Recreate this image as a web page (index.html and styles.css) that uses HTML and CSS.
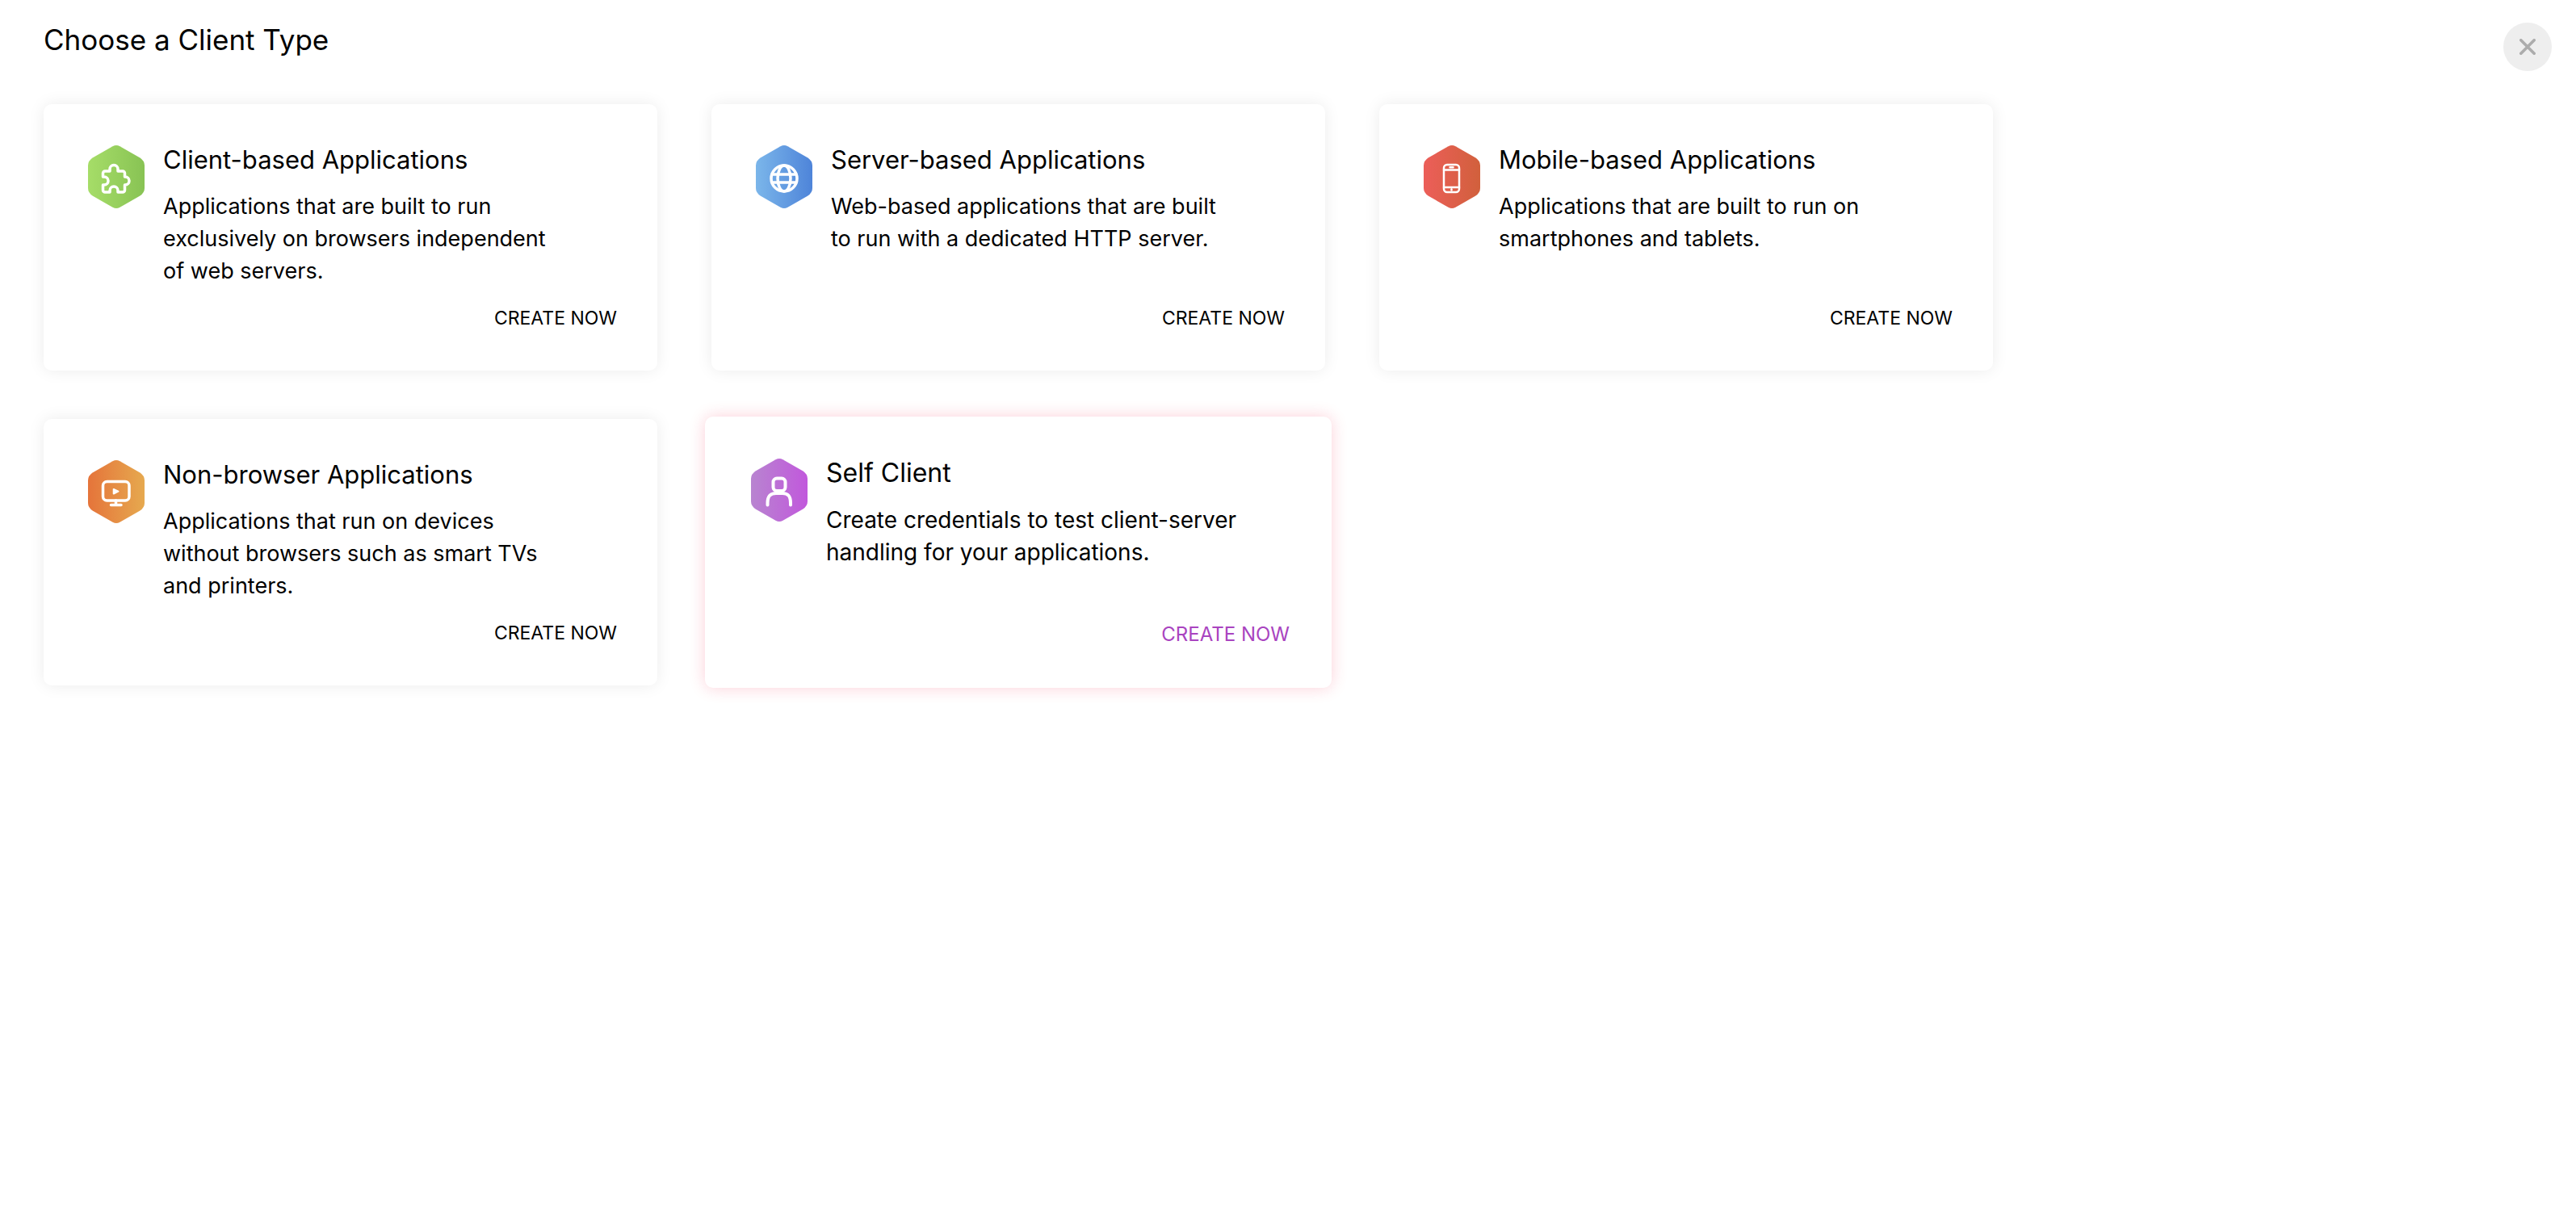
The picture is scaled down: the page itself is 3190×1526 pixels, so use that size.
FILE: index.html
```html
<!DOCTYPE html>
<html lang="en">
<head>
<meta charset="utf-8">
<title>Choose a Client Type</title>
<link rel="stylesheet" href="styles.css">
</head>
<body>
<svg class="defs" width="0" height="0" aria-hidden="true">
  <defs>
    <linearGradient id="green"><stop offset="0" stop-color="#a6dd68"/><stop offset="1" stop-color="#88c354"/></linearGradient>
    <linearGradient id="blue"><stop offset="0" stop-color="#7bb6ea"/><stop offset="1" stop-color="#4e84d9"/></linearGradient>
    <linearGradient id="red"><stop offset="0" stop-color="#ec5e59"/><stop offset="1" stop-color="#d1603c"/></linearGradient>
    <linearGradient id="orange"><stop offset="0" stop-color="#e5743a"/><stop offset="1" stop-color="#e6a94f"/></linearGradient>
    <linearGradient id="purple"><stop offset="0" stop-color="#b884d0"/><stop offset="1" stop-color="#c158dc"/></linearGradient>
    <path id="hexagon" d="M30.5 1.2Q35-1.2 39.5 1.2L64 15.2Q70 19 70 25V53Q70 59 64 62.8L39.5 76.8Q35 79.2 30.5 76.8L6 62.8Q0 59 0 53V25Q0 19 6 15.2Z"/>
  </defs>
</svg>

<header class="page-header">
  <h1 class="page-title">Choose a Client Type</h1>
  <button class="close" type="button" aria-label="Close">
    <svg width="20" height="20" viewBox="0 0 20 20" fill="none" stroke="#acacac" stroke-width="3.6" stroke-linecap="round"><path d="M1.800 1.800l16.400 16.400M18.200 1.800l-16.400 16.400"/></svg>
  </button>
</header>

<main class="cards">
  <article class="card">
    <svg class="icon" viewBox="0 0 70 78" aria-hidden="true">
      <use href="#hexagon" fill="url(#green)"/>
      <path class="line" d="M21 32H27V29.500a5 5 0 0 1 10 0V32H43a2.500 2.500 0 0 1 2.500 2.500V39H46a5 5 0 0 1 0 10H45.500V55.500a2.500 2.500 0 0 1-2.500 2.500H37V56a5 5 0 0 0-10 0V58H21a2.500 2.500 0 0 1-2.500-2.500V49H20a5 5 0 0 0 0-10H18.500V34.500A2.500 2.500 0 0 1 21 32Z"/>
    </svg>
    <div class="body">
      <h2 class="name">Client-based Applications</h2>
      <p class="text">Applications that are built to run exclusively on browsers independent of web servers.</p>
    </div>
    <button class="create" type="button">CREATE NOW</button>
  </article>

  <article class="card">
    <svg class="icon" viewBox="0 0 70 78" aria-hidden="true">
      <use href="#hexagon" fill="url(#blue)"/>
      <g class="line"><circle cx="35" cy="41" r="16"/><ellipse cx="35" cy="41" rx="8" ry="16"/><path d="M20 36H50M20 46H50"/></g>
    </svg>
    <div class="body">
      <h2 class="name">Server-based Applications</h2>
      <p class="text">Web-based applications that are built to run with a dedicated HTTP server.</p>
    </div>
    <button class="create" type="button">CREATE NOW</button>
  </article>

  <article class="card">
    <svg class="icon" viewBox="0 0 70 78" aria-hidden="true">
      <use href="#hexagon" fill="url(#red)"/>
      <g class="line thin"><rect x="25" y="24" width="19" height="34" rx="4"/><path d="M25 30.500H44M25 52H44M32.500 27.300H36.500M34.500 54.500V55.500"/></g>
    </svg>
    <div class="body">
      <h2 class="name">Mobile-based Applications</h2>
      <p class="text">Applications that are built to run on smartphones and tablets.</p>
    </div>
    <button class="create" type="button">CREATE NOW</button>
  </article>

  <article class="card">
    <svg class="icon" viewBox="0 0 70 78" aria-hidden="true">
      <use href="#hexagon" fill="url(#orange)"/>
      <g class="line"><rect x="18.500" y="26.500" width="32.500" height="23.500" rx="5"/><path d="M34.500 50V55M28.500 55.500H41"/></g>
      <path fill="#fff" stroke="#fff" stroke-width="2" stroke-linejoin="round" d="M31.700 36V41.500L37.500 38.700Z"/>
    </svg>
    <div class="body">
      <h2 class="name">Non-browser Applications</h2>
      <p class="text">Applications that run on devices without browsers such as smart TVs and printers.</p>
    </div>
    <button class="create" type="button">CREATE NOW</button>
  </article>

  <article class="card active">
    <svg class="icon" viewBox="0 0 70 78" aria-hidden="true">
      <use href="#hexagon" fill="url(#purple)"/>
      <g class="line bold"><rect x="27.500" y="24.500" width="15" height="15.500" rx="4.500"/><path d="M20.500 57.500V55C20.500 46 24.500 43 31 43H39C45.500 43 49 46 49 55V57.500"/></g>
    </svg>
    <div class="body">
      <h2 class="name">Self Client</h2>
      <p class="text">Create credentials to test client-server handling for your applications.</p>
    </div>
    <button class="create" type="button">CREATE NOW</button>
  </article>
</main>
</body>
</html>
```
FILE: styles.css
```css
* {
  box-sizing: border-box;
}

body {
  margin: 0;
  background: #fff;
  color: #000;
  font-family: Inter, "Liberation Sans", sans-serif;
}

.defs {
  position: absolute;
}

.page-header {
  display: flex;
  justify-content: space-between;
  align-items: flex-start;
  padding: 28px 30px 0 54px;
}

.page-title {
  margin: 0;
  font-size: 35px;
  line-height: 42px;
  font-weight: 400;
}

.close {
  display: flex;
  align-items: center;
  justify-content: center;
  width: 60px;
  height: 60px;
  padding: 0;
  border: 0;
  border-radius: 50%;
  background: #eee;
  cursor: pointer;
}

.cards {
  display: grid;
  grid-template-columns: repeat(auto-fill, 760px);
  gap: 60px 67px;
  padding: 41px 54px 60px;
}

.card {
  display: grid;
  grid-template-columns: 70px 1fr;
  grid-template-rows: 1fr auto;
  column-gap: 23px;
  min-height: 330px;
  padding: 51px 50px 50px 55px;
  border-radius: 10px;
  background: #fff;
  box-shadow: 0 0 20px rgba(0, 0, 0, 0.08);
}

.card.active {
  margin: -3px -8px;
  padding: 52px 52px 51px 57px;
  box-shadow: 0 0 20px rgba(240, 20, 60, 0.2);
}

.icon {
  width: 70px;
  height: 78px;
}

.line {
  fill: none;
  stroke: #fff;
  stroke-width: 3.5px;
  stroke-linecap: round;
  stroke-linejoin: round;
}

.thin {
  stroke-width: 2.5px;
}

.bold {
  stroke-width: 4px;
}

.name {
  margin: 0 0 20px;
  font-size: 31px;
  line-height: 36px;
  font-weight: 400;
}

.text {
  max-width: 490px;
  margin: 0;
  font-size: 27px;
  line-height: 40px;
}

.create {
  grid-column: 2;
  justify-self: end;
  padding: 0;
  border: 0;
  background: none;
  color: inherit;
  font: inherit;
  font-size: 23px;
  line-height: 30px;
  cursor: pointer;
}

/* The highlighted card is drawn one size up */
.active .name {
  font-size: 32px;
}

.active .text {
  max-width: 530px;
  font-size: 28px;
}

.active .create {
  color: #a944c0;
  font-size: 24px;
}
```
